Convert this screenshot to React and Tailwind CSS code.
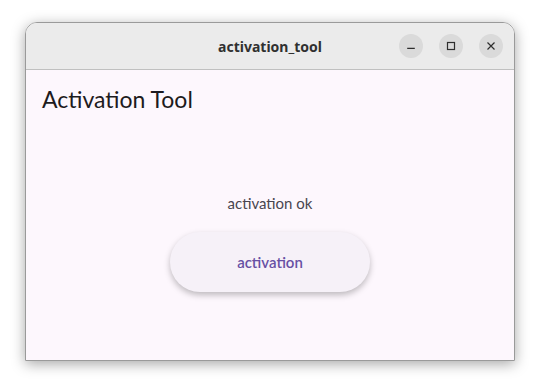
const WinButton = ({ children }) => (
  <div className="w-6 h-6 rounded-full bg-[#dadada] flex items-center justify-center text-[#2e2e2e]">
    {children}
  </div>
);

export default function App() {
  return (
    <div className="w-[540px] h-[389px] bg-white pl-[25px] pt-[22px]">
      <div className="w-[490px] h-[339px] flex flex-col rounded-t-[12px] border border-[#9a9a9a] shadow-[0_3px_14px_rgba(0,0,0,0.35)] overflow-hidden">
        <div className="h-[47px] shrink-0 bg-[#ebebeb] border-b border-[#c0c0c0] flex items-center relative">
          <div className="absolute inset-0 flex items-center justify-center font-['Noto_Sans',sans-serif] font-bold text-[14px] text-[#303030]">
            activation_tool
          </div>
          <div className="ml-auto mr-[11px] flex gap-4 relative">
            <WinButton>
              <svg width="10" height="10" viewBox="0 0 10 10"><path d="M1.2 7.3h7.6" stroke="currentColor" strokeWidth="1.2" /></svg>
            </WinButton>
            <WinButton>
              <svg width="10" height="10" viewBox="0 0 10 10"><rect x="1.5" y="1.5" width="7" height="7" fill="none" stroke="currentColor" strokeWidth="1.2" /></svg>
            </WinButton>
            <WinButton>
              <svg width="10" height="10" viewBox="0 0 10 10"><path d="M1.5 1.5l7 7M8.5 1.5l-7 7" stroke="currentColor" strokeWidth="1.2" /></svg>
            </WinButton>
          </div>
        </div>
        <div className="flex-1 bg-[#fdf7fd] flex flex-col font-['Lato',sans-serif]">
          <div className="pl-[16px] pt-[15px] text-[23px] leading-[28px] text-[#1d1b20]">Activation Tool</div>
          <div className="flex flex-col items-center mt-[80px]">
            <div className="text-[15px] leading-[20px] text-[#49454f]">activation ok</div>
            <button className="mt-[19px] w-[200px] h-[60px] rounded-full bg-[#f6f1f8] shadow-[0_3px_6px_rgba(0,0,0,0.25)] text-[#6750a4] text-[15px] font-semibold">
              activation
            </button>
          </div>
        </div>
      </div>
    </div>
  );
}
